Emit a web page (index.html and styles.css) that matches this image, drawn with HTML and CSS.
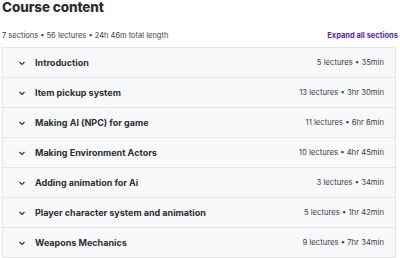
FILE: index.html
```html
<!DOCTYPE html>
<html lang="en">
    <head>
        <meta charset="UTF-8" />
        <meta name="viewport" content="width=device-width, initial-scale=1.0" />
        <title>Course content</title>
        <link rel="stylesheet" href="styles.css">
    </head>
    <body>
        <div class="curriculum">
            <h2>Course content</h2>
            <div class="summary">
                <span>7 sections • 56 lectures • 24h 46m total length</span>
                <a class="expand" href="#">Expand all sections</a>
            </div>

            <div class="sections">
                <div class="section">
                    <span class="chevron"><svg viewBox="0 0 10 10"><path d="M2.5 4 L5 6.5 L7.5 4" /></svg></span>
                    <span class="title">Introduction</span>
                    <span class="meta">5 lectures • 35min</span>
                </div>
                <div class="section">
                    <span class="chevron"><svg viewBox="0 0 10 10"><path d="M2.5 4 L5 6.5 L7.5 4" /></svg></span>
                    <span class="title">Item pickup system</span>
                    <span class="meta">13 lectures • 3hr 30min</span>
                </div>
                <div class="section">
                    <span class="chevron"><svg viewBox="0 0 10 10"><path d="M2.5 4 L5 6.5 L7.5 4" /></svg></span>
                    <span class="title">Making AI (NPC) for game</span>
                    <span class="meta">11 lectures • 6hr 6min</span>
                </div>
                <div class="section">
                    <span class="chevron"><svg viewBox="0 0 10 10"><path d="M2.5 4 L5 6.5 L7.5 4" /></svg></span>
                    <span class="title">Making Environment Actors</span>
                    <span class="meta">10 lectures • 4hr 45min</span>
                </div>
                <div class="section">
                    <span class="chevron"><svg viewBox="0 0 10 10"><path d="M2.5 4 L5 6.5 L7.5 4" /></svg></span>
                    <span class="title">Adding animation for Ai</span>
                    <span class="meta">3 lectures • 34min</span>
                </div>
                <div class="section">
                    <span class="chevron"><svg viewBox="0 0 10 10"><path d="M2.5 4 L5 6.5 L7.5 4" /></svg></span>
                    <span class="title">Player character system and animation</span>
                    <span class="meta">5 lectures • 1hr 42min</span>
                </div>
                <div class="section">
                    <span class="chevron"><svg viewBox="0 0 10 10"><path d="M2.5 4 L5 6.5 L7.5 4" /></svg></span>
                    <span class="title">Weapons Mechanics</span>
                    <span class="meta">9 lectures • 7hr 34min</span>
                </div>
            </div>
        </div>
    </body>
</html>
```

FILE: styles.css
```css
body {
    font-family: Inter, "Noto Sans", sans-serif;
    margin: 0;
    background: #ffffff;
    color: #2d2f31;
}
.curriculum {
    padding: 0 4px 0 2px;
}
h2 {
    font-size: 13.5px;
    font-weight: 800;
    margin: 0;
    line-height: 15px;
    letter-spacing: -0.1px;
}
.summary {
    display: flex;
    justify-content: space-between;
    align-items: center;
    font-size: 7.5px;
    margin-top: 14px;
    height: 12px;
    margin-bottom: 6px;
    color: #3e4143;
}
.expand {
    color: #5624d0;
    font-weight: 700;
    font-size: 7.5px;
    margin-right: -2px;
    text-decoration: none;
}
.sections {
    border: 1px solid #e4e6e8;
}
.section {
    display: flex;
    align-items: center;
    height: 29px;
    padding: 0 11px 0 14px;
    background: #f7f9fa;
    border-bottom: 1px solid #e4e6e8;
}
.section:last-child {
    border-bottom: none;
}
.chevron {
    width: 10px;
    height: 10px;
    margin-right: 8px;
    display: flex;
}
.chevron svg {
    width: 10px;
    height: 10px;
    fill: none;
    stroke: #2d2f31;
    stroke-width: 1.1;
}
.title {
    flex: 1;
    font-size: 9px;
    font-weight: 700;
}
.meta {
    font-size: 7.7px;
    color: #3e4143;
}
```
